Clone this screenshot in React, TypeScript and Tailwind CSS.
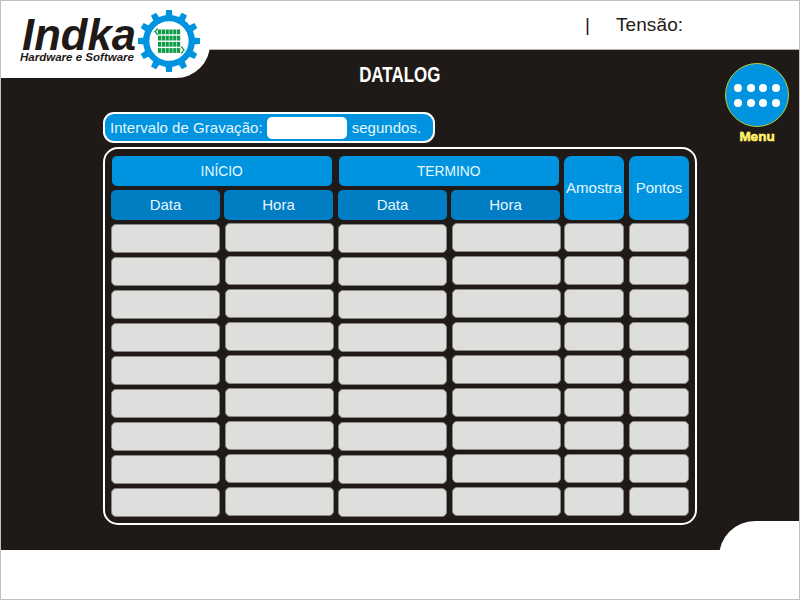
const ROWS = Array.from({ length: 9 }, (_, i) => i);

function Cells({ className }: { className: string }) {
  return (
    <div className={`flex flex-col gap-1 ${className}`}>
      {ROWS.map((row) => (
        <div key={row} className="h-[29px] w-full rounded-[5px] border border-[#8b8988] bg-[#dededd]" />
      ))}
    </div>
  );
}

function SubHeader({ label }: { label: string }) {
  return (
    <div className="flex h-[30px] w-[109px] items-center justify-center rounded-[5px] bg-[#007dc3] text-[15px] text-[#e6f7ff]">
      {label}
    </div>
  );
}

function Period({ title, className }: { title: string; className: string }) {
  return (
    <section className={`flex flex-col ${className}`}>
      <h2 className="ml-px flex h-[30px] w-[220px] items-center justify-center rounded-[5px] bg-[#0093df] text-[15.5px] text-[#e6f7ff]">
        <span className="scale-x-[0.89]">{title}</span>
      </h2>
      <div className="mt-1 flex gap-1">
        <SubHeader label="Data" />
        <SubHeader label="Hora" />
      </div>
      <div className="flex gap-[5px]">
        <Cells className="mt-1 w-[109px]" />
        <Cells className="mt-[3px] w-[109px]" />
      </div>
    </section>
  );
}

function Single({ title }: { title: string }) {
  return (
    <section className="flex w-[60px] flex-col">
      <h2 className="flex h-16 items-center justify-center rounded-[7px] bg-[#0093df] text-[15px] text-[#e6f7ff]">
        {title}
      </h2>
      <Cells className="mt-[3px] w-[60px]" />
    </section>
  );
}

function Gear() {
  return (
    <svg className="absolute left-[136px] top-[8px] h-[64px] w-[64px]" viewBox="-32 -32 64 64">
      {Array.from({ length: 12 }, (_, i) => (
        <path key={i} d="M-3.6 -23L-2.9 -31H2.9L3.6 -23Z" fill="#0093df" transform={`rotate(${i * 30})`} />
      ))}
      <circle r="22.8" fill="white" stroke="#0093df" strokeWidth="6.3" />
      <g transform="translate(0 1)" fill="#109a48">
        {[-12.5, -6.3, -0.1, 6.1].map((y) =>
          [-11, -7.2, -3.4, 0.4, 4.2, 8].map((x) => <rect key={`${x}/${y}`} x={x} y={y} width="3.2" height="4.8" />),
        )}
        <g fill="none" stroke="#109a48" strokeWidth="1.3">
          <path d="M-11 -13C-13 -13 -12.5 -11 -14 -10.3C-12.5 -9.5 -13 -8 -11 -7.5" />
          <path d="M12 5C14 5 13.3 7 15 8C13.3 9 14 11 12 11.2" />
        </g>
      </g>
    </svg>
  );
}

function Logo() {
  return (
    <div className="absolute left-0 top-0 h-[77px] w-[209px] rounded-br-[34px] bg-white">
      <svg className="absolute left-0 top-0 h-[77px] w-[150px]" fill="#1f1a17" fontFamily="Liberation Sans, Arial, sans-serif" fontWeight="bold" fontStyle="italic">
        <text x="21" y="49" fontSize="45" textLength="114" lengthAdjust="spacingAndGlyphs">Indka</text>
        <text x="19" y="60" fontSize="11.3" textLength="114" lengthAdjust="spacingAndGlyphs">Hardware e Software</text>
      </svg>
      <Gear />
    </div>
  );
}

function MenuButton() {
  return (
    <button className="absolute left-[724px] top-[62px] flex w-[64px] flex-col items-center">
      <span className="grid size-[64px] grid-cols-[repeat(4,8px)] content-center justify-center gap-x-[4.4px] gap-y-[7px] rounded-full border border-[#b5d334] bg-[#0093df]">
        {Array.from({ length: 8 }, (_, i) => (
          <span key={i} className="size-2 rounded-full bg-white" />
        ))}
      </span>
      <span className="mt-[2px] text-[13.5px] font-bold leading-4 text-[#fff36b] [-webkit-text-stroke:0.6px_#fff36b]">Menu</span>
    </button>
  );
}

export default function App() {
  return (
    <div className="relative flex h-[600px] w-[800px] flex-col overflow-hidden border border-[#c0c0c0] bg-white font-['Liberation_Sans',Arial,sans-serif] text-[#1f1a17]">
      <header className="flex h-[49px] shrink-0 items-center border-b border-[#b5b3b2] pl-[584px] text-[19px]">
        <span>|</span>
        <span className="ml-[26px] tracking-[0.1px]">Tensão:</span>
      </header>
      <main className="h-[500px] shrink-0 bg-[#1f1a17] pl-[102px]">
        <h1 className="-ml-[102px] flex h-[62px] justify-center pt-[13px] text-[22px] font-bold leading-6 text-white">
          <span className="scale-x-[0.77]">DATALOG</span>
        </h1>
        <div className="flex h-[31px] w-[332px] items-center rounded-[11px] border-2 border-white bg-[#0093df] pl-[5px] text-[15px] text-[#e6f7ff]">
          <label className="mt-px tracking-[0.04px]">Intervalo de Gravação:</label>
          <div className="ml-[4px] h-[22px] w-[80px] rounded-[5px] bg-white" />
          <span className="ml-[5px] mt-px tracking-[0.04px]">segundos.</span>
        </div>
        <div className="mt-1 flex h-[378px] w-[594px] rounded-[15px] border-2 border-white pl-[6px] pt-[7px]">
          <Period title="INÍCIO" className="w-[223px]" />
          <Period title="TERMINO" className="ml-[4px] w-[223px]" />
          <div className="ml-[3px] flex gap-[5px]">
            <Single title="Amostra" />
            <Single title="Pontos" />
          </div>
        </div>
      </main>
      <Logo />
      <MenuButton />
      <div className="absolute left-[718px] top-[520px] h-[78px] w-[80px] rounded-tl-[36px] bg-white" />
    </div>
  );
}
